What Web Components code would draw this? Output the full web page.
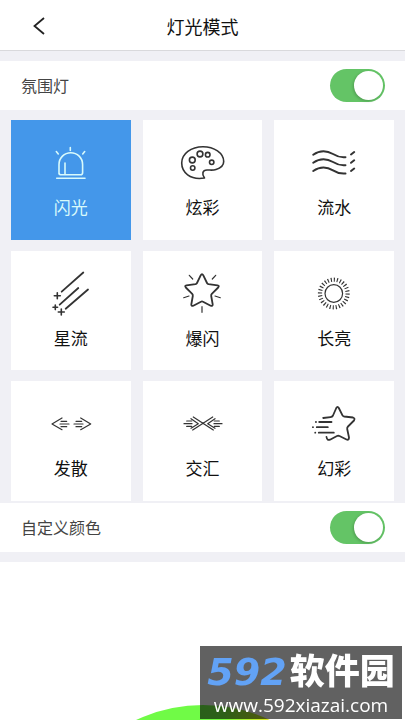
<!DOCTYPE html>
<html lang="zh-CN">
<head>
<meta charset="utf-8">
<meta name="viewport" content="width=device-width, initial-scale=1">
<title>灯光模式</title>
<style>
body { margin: 0; background: #fff; font-family: "Noto Sans CJK SC", "Noto Sans", sans-serif; color: #222; }
</style>
</head>
<body>
<light-app></light-app>
<script>
const define = (name, html, setup) => {
  const template = document.createElement('template');
  template.innerHTML = html;
  customElements.define(name, class extends HTMLElement {
    constructor() {
      super();
      this.attachShadow({ mode: 'open' }).append(template.content.cloneNode(true));
    }
    connectedCallback() { if (setup) setup(this, this.shadowRoot); }
  });
};

const icons = {
  flash: '<path d="M18 34V24.500a11.800 11.800 0 0 1 23.600 0V32.700q0 2-2 2H20q-2 0-2-2M24 23v11M15.700 38.300H44M29.300 7.500v3M15.300 11.500l2 2.500M43.700 11.500l-2 2.500"/>',
  palette: '<path d="M31.500 38C28.500 34 29.500 30 34 30C38 30 40 30.500 43 29.500C48 28 50.700 25 50.700 21.500C50.700 13 41 6.700 30 6.700C18 6.700 8.700 14 8.700 23C8.700 32 17 40.500 31.500 38Z"/><circle cx="19.300" cy="20" r="2.900"/><circle cx="27" cy="14" r="2.900"/><circle cx="34.700" cy="14.700" r="2.300"/><circle cx="38.700" cy="22.300" r="2.200"/><circle cx="19.700" cy="28" r="2.200"/>',
  waves: '<g stroke-width="2"><path d="M9.200 14.700C16 10 23 10.500 29 14C33 16.500 37 17.700 41.500 17.200"/><path d="M9.200 22.700C16 18 23 18.500 29 22C33 24.500 37 25.700 41.500 25.200"/><path d="M9.200 31C16 26.300 23 26.800 29 30.300C33 32.800 37 34 41.500 33.500"/><path d="M47 14.500l3.200-2.500M47 22.800l3.200-2.500M47 31l3.200-2.500"/></g>',
  meteor: '<path stroke-width="1.800" d="M20.700 20.700L42.300 1.500M18.700 33.700L37.300 17M24.700 37.700L47 18.500"/><path d="M16.300 21.700v6M13.300 24.700h6M14.300 34v4.600M12 36.300h4.600M20.300 38v6M17.300 41h6"/>',
  burst: '<path stroke-width="1.800" d="M27.800 4.200Q29 2 30.200 4.200L34 12Q34.500 13 35.500 13.200L44.500 14.300Q46.700 14.800 45.200 16.500L38.800 22.800Q38 23.700 38.200 25L39.700 33.500Q39.700 35.600 37.700 34.700L30 30.700Q29 30.200 28 30.700L20.300 34.700Q18.300 35.600 18.300 33.500L19.800 25Q20 23.700 19.200 22.800L12.800 16.500Q11.300 14.800 13.500 14.300L22.500 13.200Q23.500 13 24 12Z"/><path stroke-width="1.200" d="M16.300 4.300l3.400 3.700M42.700 4.300L39.300 8M10.700 26.700L16 25M47.300 26.700L42 25M29 35.700v5.600"/>',
  sun: '<circle cx="29.800" cy="22.500" r="8.800" stroke-width="1.200"/><circle cx="29.800" cy="22.500" r="13.800" stroke-width="4.200" stroke-linecap="butt" pathLength="84" stroke-dasharray="1.100 1.900"/>',
  spread: '<g stroke-width="1.200"><path d="M21 17L11 23L21 28.700M39.700 17L49.700 23L39.700 28.700"/><path d="M19 23h9M20 20.300h5.700M20 25.700h5.700M33 23h9M35 20.300h5.700M35 25.700h5.700"/></g>',
  cross: '<g stroke-width="1.200"><path d="M20.300 16L40.300 29M39.700 16L19.700 29M18 17.700L25.300 22.700L18 27.300M42 17.700L34.700 22.700L42 27.300"/><path d="M11 22.700h8M13.700 20h5M13.700 25.400h5M41 22.700h8M41.300 20h5M41.300 25.400h5"/></g>',
  dream: '<path stroke-width="1.800" d="M19.200 17L26.500 16.200Q28.300 16 29 14.500L32.300 7Q33.500 4.700 34.800 7L38.500 14.300Q39 15.300 40.200 15.500L49 16.500Q51.300 17.200 50 19.500L44 25.500Q43 26.500 43.200 28L45 36.500Q45 39.500 42.500 38.500L35.500 35Q34.200 34.500 33 35L26 38.700Q23 39.600 22.500 36"/><path stroke-width="1.800" d="M15.200 21h12.300M12.800 26.200h11M14.800 31.700h15M11.900 21h.1M8.900 26.200h.1M11.200 31.700h.1"/>'
};

define('mode-icon', `
<style>
:host { display: block; }
svg { display: block; fill: none; stroke: currentColor; stroke-width: 1.6; stroke-linecap: round; stroke-linejoin: round; }
</style>
<svg width="60" height="48" viewBox="0 0 60 48" aria-hidden="true"></svg>`,
(el, root) => { root.querySelector('svg').innerHTML = icons[el.getAttribute('name')]; });

define('mode-tile', `
<style>
:host { display: block; aspect-ratio: 1; }
button { display: flex; flex-direction: column; align-items: center; width: 100%; height: 100%; padding: 20px 0 0; gap: 6px;
  border: 0; background: #fff; color: #333; font: inherit; font-size: 17px; line-height: 26px; cursor: pointer; }
span { color: #111; }
button[aria-pressed="true"] { background: #4497ea; color: #d8fafb; }
button[aria-pressed="true"] span { color: inherit; }
</style>
<button type="button" aria-pressed="false"><span><slot></slot></span></button>`,
(el, root) => {
  const button = root.querySelector('button');
  const icon = document.createElement('mode-icon');
  icon.setAttribute('name', el.getAttribute('icon'));
  button.prepend(icon);
  button.setAttribute('aria-pressed', el.hasAttribute('selected'));
  button.addEventListener('click', () => {
    for (const tile of el.parentNode.querySelectorAll('mode-tile'))
      tile.shadowRoot.querySelector('button').setAttribute('aria-pressed', tile === el);
  });
});

define('mode-grid', `
<style>
:host { display: grid; grid-template-columns: repeat(3, 1fr); gap: 11px 12px; padding: 10px 11px 2px; }
</style>
<slot></slot>`);

define('switch-row', `
<style>
:host { display: block; background: #fff; }
label { display: flex; align-items: center; justify-content: space-between; height: 49px; padding: 0 20px 0 21px;
  font-size: 16px; line-height: 24px; color: #444; }
span { padding-bottom: 2px; }
input { appearance: none; box-sizing: border-box; display: flex; flex: none; width: 55px; height: 33px; margin: 0; padding: 2px;
  border-radius: 17px; background: #ccc; }
input::before { content: ""; width: 29px; height: 29px; border-radius: 50%; background: #fff; box-shadow: -1px 1px 3px #0003; }
input:checked { background: #64c466; justify-content: flex-end; }
</style>
<label><span><slot></slot></span><input type="checkbox" role="switch" checked></label>`);

define('page-header', `
<style>
:host { display: grid; grid-template-columns: 50px 1fr 50px; align-items: center; height: 49px; padding-top: 1px;
  border-bottom: 1px solid #d9d9dc; background: #fff; }
button { display: flex; justify-content: flex-end; padding: 8px 4px; border: 0; background: none; color: #222; }
h1 { margin: 0; font-size: 18px; line-height: 28px; font-weight: 400; text-align: center; color: #111; }
svg { fill: none; stroke: currentColor; stroke-width: 1.8; }
</style>
<button type="button" aria-label="返回"><svg width="14" height="20" viewBox="0 0 14 20"><path d="M12 2L2.500 10L12 18"/></svg></button>
<h1><slot></slot></h1>`);

define('color-wheel', `
<style>
:host { display: flex; justify-content: center; flex: 1; min-height: 0; padding-top: 143px; overflow: hidden; background: #fff; }
div { flex: none; width: 314px; height: 314px; border-radius: 50%;
  background: conic-gradient(#70fb46 0deg, #78fb40 8deg, #e2e820 26deg, #ff0 60deg, #f00 120deg, #f0f 180deg, #00f 240deg, #0ff 300deg, #70fb46 330deg, #70fb46 360deg); }
</style>
<div role="img" aria-label="色盘"></div>`);

define('site-mark', `
<style>
:host { position: fixed; right: 3px; bottom: 1px; box-sizing: border-box; width: 202px; height: 73px; padding: 6px 3px 0;
  background: rgba(0, 0, 0, .62); color: #fff; white-space: nowrap; }
.name { display: flex; align-items: center; justify-content: center; height: 40px; gap: 3px; }
b { font: italic 700 38px/40px "DejaVu Sans", sans-serif; color: #62a2f5; }
strong { font: 900 35px/40px "Liberation Sans", "Noto Sans CJK SC", sans-serif; }
a { display: block; padding-top: 2px; font: 19px/22px "Open Sans", sans-serif; text-align: center; color: inherit; text-decoration: none; }
</style>
<div class="name"><b>592</b><strong>软件园</strong></div>
<a href="#">www.592xiazai.com</a>`);

define('light-app', `
<style>
:host { display: flex; flex-direction: column; height: 100vh; overflow: hidden; background: #f0f0f5; }
page-header, .top, mode-grid, .custom { flex: none; }
.top { margin-top: 10px; }
.custom { margin-bottom: 10px; }
</style>
<page-header>灯光模式</page-header>
<switch-row class="top">氛围灯</switch-row>
<mode-grid>
  <mode-tile icon="flash" selected>闪光</mode-tile>
  <mode-tile icon="palette">炫彩</mode-tile>
  <mode-tile icon="waves">流水</mode-tile>
  <mode-tile icon="meteor">星流</mode-tile>
  <mode-tile icon="burst">爆闪</mode-tile>
  <mode-tile icon="sun">长亮</mode-tile>
  <mode-tile icon="spread">发散</mode-tile>
  <mode-tile icon="cross">交汇</mode-tile>
  <mode-tile icon="dream">幻彩</mode-tile>
</mode-grid>
<switch-row class="custom">自定义颜色</switch-row>
<color-wheel></color-wheel>
<site-mark></site-mark>`);
</script>
</body>
</html>
